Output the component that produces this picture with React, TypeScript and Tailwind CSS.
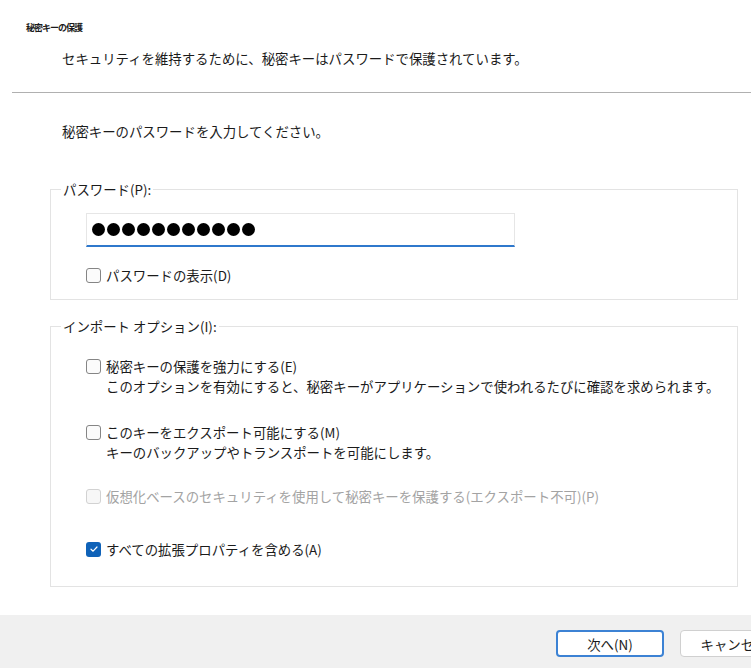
import React from 'react';

const font = { fontFamily: '"Noto Sans CJK JP", "Noto Sans", sans-serif' };

const Box = ({ checked = false, disabled = false }: { checked?: boolean; disabled?: boolean }) => {
  if (checked) {
    return (
      <span className="w-[15px] h-[15px] shrink-0 rounded-[3px] bg-[#0f62b8] flex items-center justify-center">
        <svg width="10" height="10" viewBox="0 0 10 10" fill="none">
          <path d="M2 5.2 L4.1 7.2 L8 3" stroke="white" strokeWidth="1.2" strokeLinecap="round" strokeLinejoin="round" />
        </svg>
      </span>
    );
  }
  return (
    <span
      className={
        disabled
          ? 'w-[15px] h-[15px] shrink-0 rounded-[3px] border border-[#d2d2d2] bg-[#f7f7f7]'
          : 'w-[15px] h-[15px] shrink-0 rounded-[3px] border border-[#858585] bg-[#fbfbfb]'
      }
    />
  );
};

const Option = ({
  label,
  note,
  checked,
  disabled,
  className,
}: {
  label: string;
  note?: string;
  checked?: boolean;
  disabled?: boolean;
  className?: string;
}) => (
  <div className={'flex flex-col ' + (className ?? '')}>
    <label className={'flex items-center gap-[5px] h-[20px] ' + (disabled ? 'text-[#a3a3a3]' : 'text-[#1b1b1b]')}>
      <Box checked={checked} disabled={disabled} />
      <span>{label}</span>
    </label>
    {note && <p className="pl-[20px] h-[21px] leading-[21px] text-[#1b1b1b]">{note}</p>}
  </div>
);

export default function App() {
  return (
    <div className="w-[751px] h-[668px] overflow-hidden bg-white flex flex-col text-[13.4px] leading-[20px] text-[#1b1b1b]" style={font}>
      {/* header */}
      <div className="pt-[22px]">
        <h1 className="pl-[26px] text-[9px] leading-[12px] font-bold tracking-[-1px]">秘密キーの保護</h1>
        <p className="pl-[62px] mt-[14px]">セキュリティを維持するために、秘密キーはパスワードで保護されています。</p>
        <div className="ml-[12px] mt-[24px] h-px bg-[#b0b0b0]" />
      </div>

      {/* body */}
      <div className="pl-[50px] pr-[13px]">
        <p className="pl-[12px] mt-[28px]">秘密キーのパスワードを入力してください。</p>

        <fieldset className="mt-[38px] border border-[#e3e3e3] pl-[35px] pb-[14px]">
          <legend className="ml-[-25px] px-[2px]">パスワード(P):</legend>
          <div className="mt-[14px] w-[429px] h-[34px] border border-[#e6e6e6] border-b-2 border-b-[#2f78cc] flex items-center gap-[2px] pl-[5px]">
            {Array.from({ length: 11 }).map((_, i) => (
              <span key={i} className="w-[13px] h-[13px] rounded-full bg-black" />
            ))}
          </div>
          <Option className="mt-[18px]" label="パスワードの表示(D)" />
        </fieldset>

        <fieldset className="mt-[16px] border border-[#e3e3e3] pl-[35px] pb-[27px]">
          <legend className="ml-[-25px] px-[2px]">インポート オプション(I):</legend>
          <Option
            className="mt-[20px]"
            label="秘密キーの保護を強力にする(E)"
            note="このオプションを有効にすると、秘密キーがアプリケーションで使われるたびに確認を求められます。"
          />
          <Option
            className="mt-[25px]"
            label="このキーをエクスポート可能にする(M)"
            note="キーのバックアップやトランスポートを可能にします。"
          />
          <Option
            className="mt-[23px]"
            disabled
            label="仮想化ベースのセキュリティを使用して秘密キーを保護する(エクスポート不可)(P)"
          />
          <Option className="mt-[33px]" checked label="すべての拡張プロパティを含める(A)" />
        </fieldset>
      </div>

      {/* footer */}
      <div className="mt-auto h-[53px] bg-[#f0f0f0] flex items-start pt-[15px] pl-[556px] gap-[16px] shrink-0">
        <button className="w-[108px] h-[27px] shrink-0 rounded-[4px] border-2 border-[#3c82d4] bg-white text-[13.4px]">次へ(N)</button>
        <button className="w-[108px] h-[27px] shrink-0 rounded-[4px] border border-[#d0d0d0] bg-white text-[13.4px]">キャンセル</button>
      </div>
    </div>
  );
}
